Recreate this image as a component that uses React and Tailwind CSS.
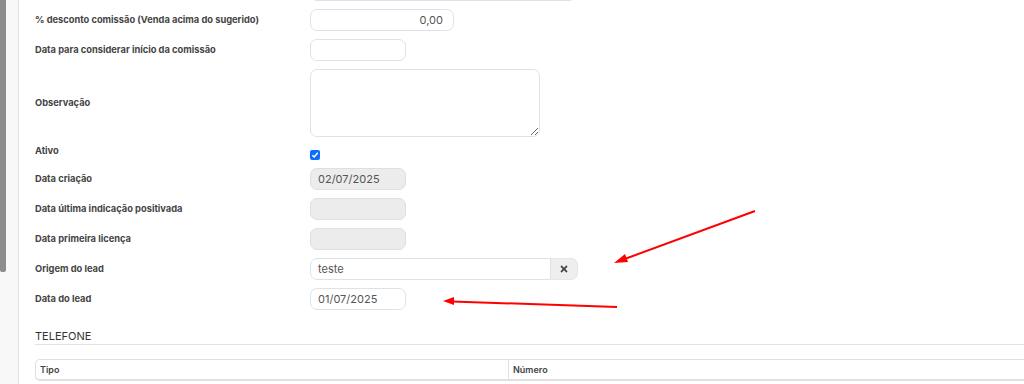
import React from "react";
import { FaTimes } from "react-icons/fa";

const Label = ({ children }) => (
  <div className="text-[9.3px] font-bold text-[#444] leading-[14px]">{children}</div>
);

const inputBase =
  "h-[22px] rounded-[7px] border border-[#dde2ea] bg-white px-[7px] text-[11px] text-[#555] leading-[20px]";
const disabledBase =
  "h-[22px] w-[96px] rounded-[7px] border border-[#dcdfe3] bg-[#ececec] px-[7px] text-[11px] text-[#555] leading-[20px]";

const Row = ({ label, children, className = "" }) => (
  <div className={"grid grid-cols-[275px_1fr] items-center " + className}>
    <Label>{label}</Label>
    <div className="flex">{children}</div>
  </div>
);

export default function App() {
  return (
    <div
      className="relative h-[384px] w-[1024px] overflow-hidden bg-white"
      style={{ fontFamily: "Inter, 'Noto Sans', sans-serif" }}
    >
      <div className="flex h-full">
        {/* left gutter with scrollbar */}
        <div className="w-[18px] shrink-0 bg-[#f8f8f8]">
          <div className="h-[272px] w-[6px] rounded-b-[2px] bg-[#8c8c8c]" />
        </div>
        <div className="w-px shrink-0 bg-[#e3e3e3]" />

        <div className="flex-1 pl-[16px]">
          <div className="-mt-[21px] flex flex-col gap-[8px]">
            <Row label="">
              <div className={inputBase + " w-[266px]"} />
            </Row>
            <Row label="% desconto comissão (Venda acima do sugerido)">
              <div className={inputBase + " w-[144px] text-right pr-[10px]"}>0,00</div>
            </Row>
            <Row label="Data para considerar início da comissão">
              <div className={inputBase + " w-[96px]"} />
            </Row>
            <Row label="Observação">
              <textarea
                className="h-[68px] w-[230px] resize rounded-[7px] border border-[#dde2ea] bg-white outline-none"
                readOnly
              />
            </Row>
            <div className="grid h-[15px] grid-cols-[275px_1fr]">
              <div className="-mt-[1px]">
                <Label>Ativo</Label>
              </div>
              <div className="flex items-end">
                <div className="flex h-[10px] w-[10px] items-center justify-center rounded-[2px] bg-[#0d6efd]">
                  <svg width="8" height="8" viewBox="0 0 8 8">
                    <path d="M1.3 4.2 L3.2 6 L6.8 1.8" fill="none" stroke="white" strokeWidth="1.5" />
                  </svg>
                </div>
              </div>
            </div>
            <Row label="Data criação">
              <div className={disabledBase}>02/07/2025</div>
            </Row>
            <Row label="Data última indicação positivada">
              <div className={disabledBase} />
            </Row>
            <Row label="Data primeira licença">
              <div className={disabledBase} />
            </Row>
            <Row label="Origem do lead">
              <div className="flex h-[22px]">
                <div className="h-[22px] w-[241px] rounded-l-[7px] border border-[#dde2ea] bg-white px-[7px] text-[11px] leading-[20px] text-[#555]">
                  teste
                </div>
                <div className="flex h-[22px] w-[27px] items-center justify-center rounded-r-[7px] border border-l-0 border-[#e6e6e6] bg-[#eeeeee] text-[#444]">
                  <FaTimes size={10} />
                </div>
              </div>
            </Row>
            <Row label="Data do lead">
              <div className={inputBase + " w-[96px]"}>01/07/2025</div>
            </Row>
          </div>

          <div className="mt-[19px] w-[1100px] border-b border-[#e3e3e3] pb-[1px] text-[11px] leading-[14px] text-[#333]">
            TELEFONE
          </div>

          <div className="mt-[14px] flex h-[22px] w-[1100px] rounded-l-[5px] border border-b-2 border-[#e0e0e0] text-[9px] font-semibold text-[#444]">
            <div className="flex w-[473px] items-center border-r border-[#e0e0e0] pl-[4px]">Tipo</div>
            <div className="flex items-center pl-[4px]">Número</div>
          </div>
        </div>
      </div>

      {/* annotation arrows */}
      <svg className="pointer-events-none absolute left-0 top-0" width="1024" height="384">
        <line x1="755" y1="211" x2="622" y2="260" stroke="#f00" strokeWidth="2" />
        <polygon points="614,263 625,254 628,262" fill="#f00" />
        <line x1="617" y1="307" x2="452" y2="301.5" stroke="#f00" strokeWidth="2" />
        <polygon points="443,301 454,297 454,305" fill="#f00" />
      </svg>
    </div>
  );
}
